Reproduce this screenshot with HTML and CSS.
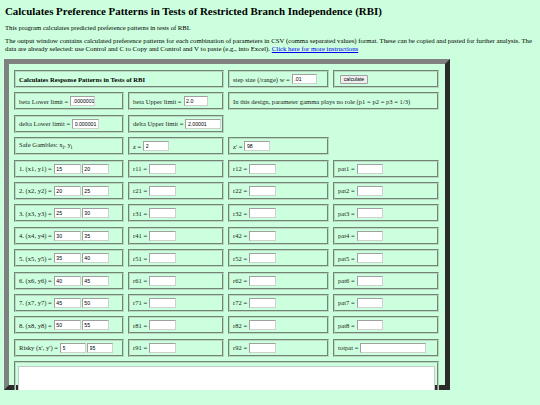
FILE: index.html
```html
<!DOCTYPE html>
<html>
<head>
<meta charset="utf-8">
<title>RBI Patterns</title>
<link rel="stylesheet" href="styles.css">
</head>
<body>
<div class="page">
  <h1 class="title">Calculates Preference Patterns in Tests of Restricted Branch Independence (RBI)</h1>
  <p class="intro">This program calculates predicted preference patterns in tests of RBI.</p>
  <p class="desc">The output window contains calculated preference patterns for each combination of parameters in CSV (comma separated values) format. These can be copied and pasted for further analysis. The data are already selected: use Control and C to Copy and Control and V to paste (e.g., into Excel). <a href="#" class="link">Click here for more instructions</a></p>

  <div class="panel">
    <div class="cell span2 bold">Calculates Response Patterns in Tests of RBI</div>
    <div class="cell">step size (/range) w = <input class="in w25" value=".01"></div>
    <div class="cell"><button class="btn">calculate</button></div>

    <div class="cell">beta Lower limit = <input class="in w25" value=".0000001"></div>
    <div class="cell">beta Upper limit = <input class="in w24" value="2.0"></div>
    <div class="cell span2">In this design, parameter gamma plays no role (p1 = p2 = p3 = 1/3)</div>

    <div class="cell">delta Lower limit = <input class="in w27" value="0.000001"></div>
    <div class="cell">delta Upper limit = <input class="in w36" value="2.00001"></div>
    <div class="blank span2"></div>

    <div class="cell"><span>Safe Gambles: x<sub>i</sub>, y<sub>i</sub></span></div>
    <div class="cell">z = <input class="in w26" value="2"></div>
    <div class="cell">z' = <input class="in w26" value="98"></div>
    <div class="blank"></div>

    <div class="cell">1. (x1, y1) = <span class="pair"><input class="in w27" value="15"><input class="in w27" value="20"></span></div>
    <div class="cell">r11 = <input class="in w27"></div>
    <div class="cell">r12 = <input class="in w27"></div>
    <div class="cell">pat1 = <input class="in w26"></div>

    <div class="cell">2. (x2, y2) = <span class="pair"><input class="in w27" value="20"><input class="in w27" value="25"></span></div>
    <div class="cell">r21 = <input class="in w27"></div>
    <div class="cell">r22 = <input class="in w27"></div>
    <div class="cell">pat2 = <input class="in w26"></div>

    <div class="cell">3. (x3, y3) = <span class="pair"><input class="in w27" value="25"><input class="in w27" value="30"></span></div>
    <div class="cell">r31 = <input class="in w27"></div>
    <div class="cell">r32 = <input class="in w27"></div>
    <div class="cell">pat3 = <input class="in w26"></div>

    <div class="cell">4. (x4, y4) = <span class="pair"><input class="in w27" value="30"><input class="in w27" value="35"></span></div>
    <div class="cell">r41 = <input class="in w27"></div>
    <div class="cell">r42 = <input class="in w27"></div>
    <div class="cell">pat4 = <input class="in w26"></div>

    <div class="cell">5. (x5, y5) = <span class="pair"><input class="in w27" value="35"><input class="in w27" value="40"></span></div>
    <div class="cell">r51 = <input class="in w27"></div>
    <div class="cell">r52 = <input class="in w27"></div>
    <div class="cell">pat5 = <input class="in w26"></div>

    <div class="cell">6. (x6, y6) = <span class="pair"><input class="in w27" value="40"><input class="in w27" value="45"></span></div>
    <div class="cell">r61 = <input class="in w27"></div>
    <div class="cell">r62 = <input class="in w27"></div>
    <div class="cell">pat6 = <input class="in w26"></div>

    <div class="cell">7. (x7, y7) = <span class="pair"><input class="in w27" value="45"><input class="in w27" value="50"></span></div>
    <div class="cell">r71 = <input class="in w27"></div>
    <div class="cell">r72 = <input class="in w27"></div>
    <div class="cell">pat7 = <input class="in w26"></div>

    <div class="cell">8. (x8, y8) = <span class="pair"><input class="in w27" value="50"><input class="in w27" value="55"></span></div>
    <div class="cell">r81 = <input class="in w27"></div>
    <div class="cell">r82 = <input class="in w27"></div>
    <div class="cell">pat8 = <input class="in w26"></div>

    <div class="cell">Risky (x', y') = <span class="pair"><input class="in w26" value="5"><input class="in w26" value="95"></span></div>
    <div class="cell">r91 = <input class="in w27"></div>
    <div class="cell">r92 = <input class="in w27"></div>
    <div class="cell">totpat = <input class="in w66"></div>

    <div class="cell span4 outcell"><textarea class="out"></textarea></div>
  </div>
</div>
</body>
</html>
```
FILE: styles.css
```css
html, body {
  margin: 0;
  padding: 0;
  background: #ccffdd;
}
.page {
  padding: 5px 5px 0 5px;
  font-family: "Liberation Serif", "Times New Roman", serif;
  color: #000;
}
.title {
  font-size: 10.9px;
  line-height: 12px;
  margin: 0;
  font-weight: bold;
}
.intro {
  font-size: 6.7px;
  line-height: 8px;
  margin: 7px 0 0 0;
}
.desc {
  font-size: 6.78px;
  line-height: 8px;
  margin: 5px 0 0 0;
}
.link {
  color: #0000ee;
  text-decoration: underline;
}
.panel {
  box-sizing: border-box;
  width: 446px;
  margin: 6px 0 0 -1px;
  border: 5px solid;
  border-color: #808080 #2b2b2b #2b2b2b #808080;
  padding: 6px 5px;
  display: grid;
  grid-template-columns: 110px 96px 101px 106px;
  grid-auto-rows: 18px;
  column-gap: 4px;
  row-gap: 4.4px;
}
.cell {
  box-sizing: border-box;
  border: 2px groove #b8d9bf;
  display: flex;
  align-items: center;
  gap: 2px;
  padding: 0 3px;
  font-size: 6.6px;
  color: #222;
  white-space: nowrap;
}
.cell sub {
  font-size: 5.4px;
  vertical-align: sub;
  line-height: 1;
}
.span2 { grid-column: span 2; }
.span4 { grid-column: span 4; }
.bold { font-weight: bold; color: #000; }
.pair {
  display: flex;
  gap: 1px;
}
.in {
  box-sizing: border-box;
  height: 10px;
  border: 1px solid #a0a0a0;
  border-color: #a0a0a0 #d0d0d0 #d0d0d0 #a0a0a0;
  background: #fff;
  padding: 0 0 0 1.5px;
  margin: 0;
  font-family: "Liberation Sans", Arial, sans-serif;
  font-size: 5.2px;
  color: #000;
  outline: none;
}
.w24 { width: 24px; }
.w25 { width: 25px; }
.w26 { width: 26px; }
.w27 { width: 27px; }
.w36 { width: 36px; }
.w66 { width: 66px; }
.btn {
  box-sizing: border-box;
  height: 9px;
  width: 28px;
  margin-left: 2px;
  padding: 0;
  font-family: "Liberation Sans", Arial, sans-serif;
  font-size: 5.2px;
  line-height: 7px;
  background: #efefef;
  border: 1px solid #a0a0a0;
  border-radius: 1px;
  color: #000;
}
.outcell {
  align-items: flex-start;
  padding: 3px 2px;
  height: 80px;
}
.out {
  box-sizing: border-box;
  width: 100%;
  height: 70px;
  margin: 0;
  border: 1px solid #c8c8c8;
  background: #fff;
  resize: none;
}
```
